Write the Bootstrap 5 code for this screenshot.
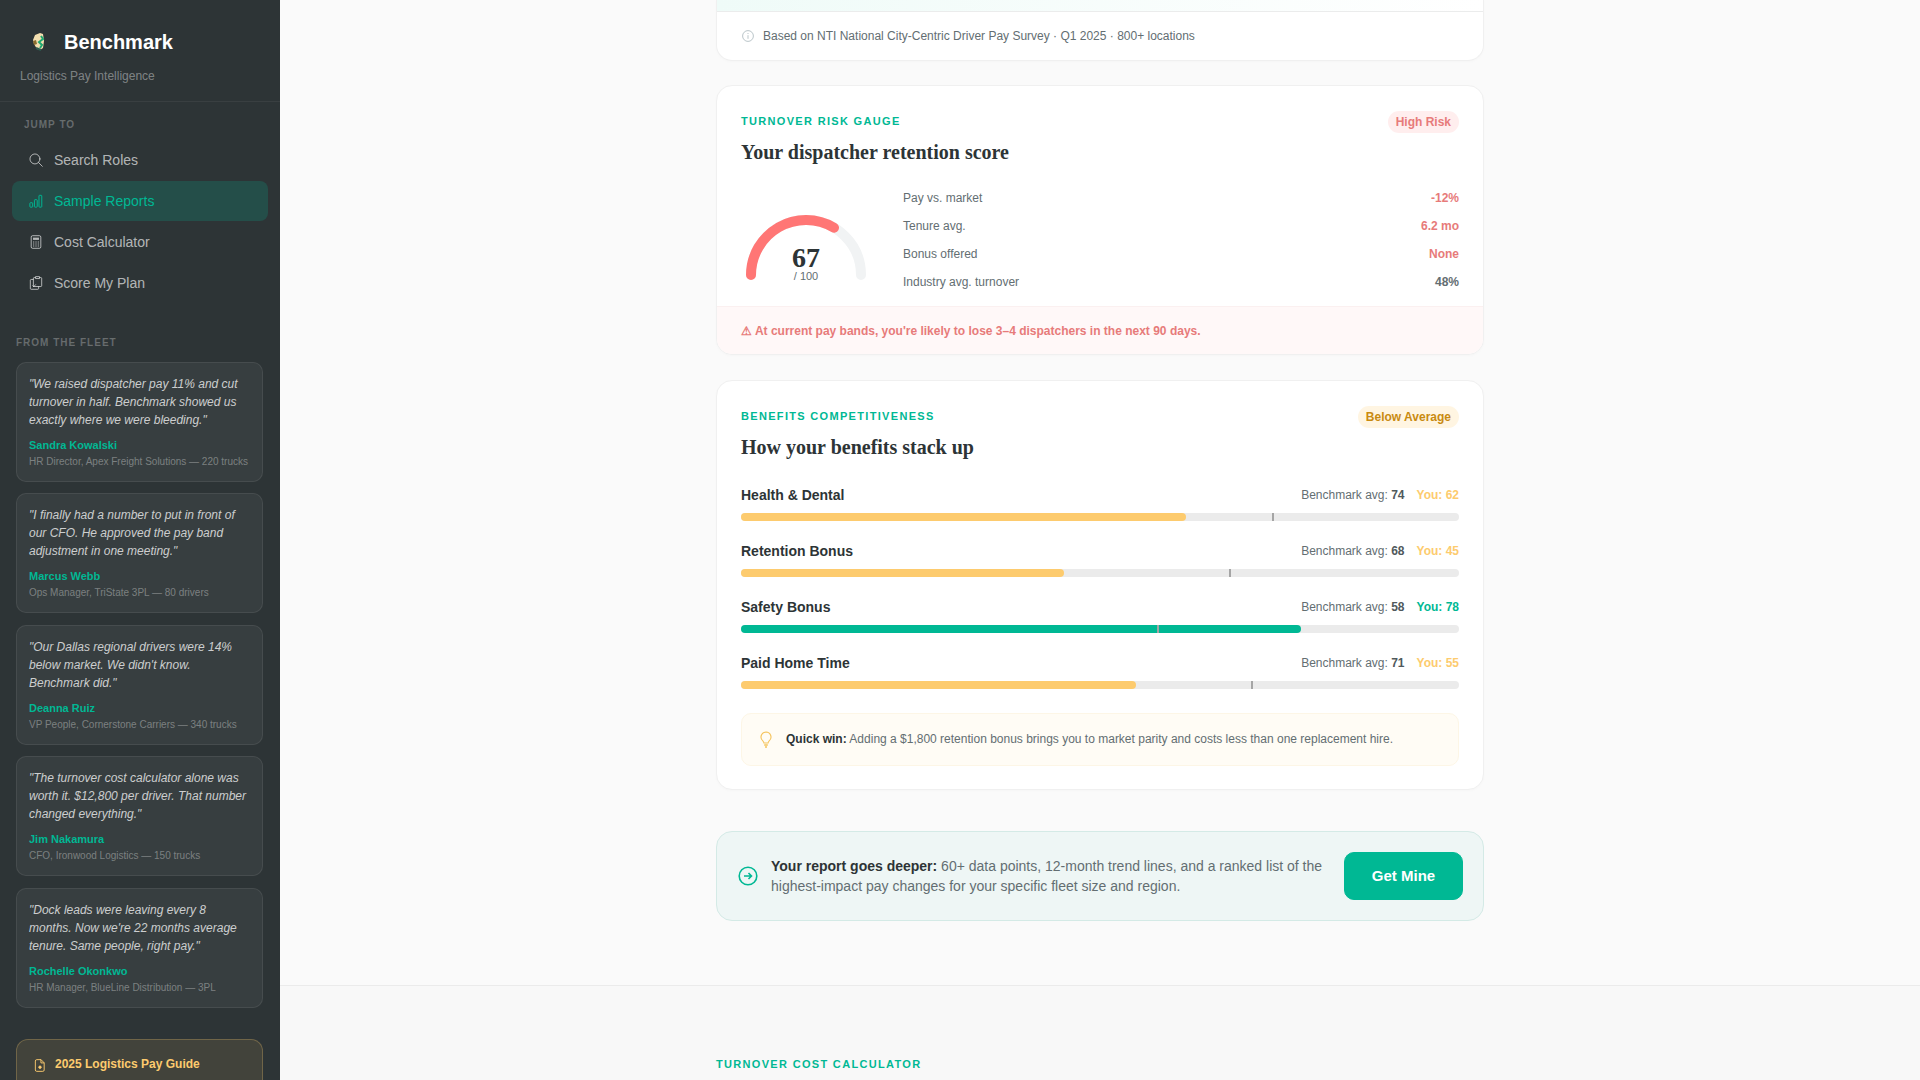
<!DOCTYPE html>
<html lang="en">
<head>
    <meta charset="UTF-8">
    <meta name="viewport" content="width=device-width, initial-scale=1.0">
    <title>Benchmark - Logistics Pay Intelligence</title>
    <link rel="stylesheet" href="https://cdn.jsdelivr.net/npm/bootstrap@5.3.0/dist/css/bootstrap.min.css">
    <script src="https://cdn.jsdelivr.net/npm/bootstrap@5.3.0/dist/js/bootstrap.bundle.min.js"></script>
    <style>
        html, body { height: 100%; overflow: hidden; }
        body { font-family: "Liberation Sans", Arial, sans-serif; background: #fafafa; color: #2d3436; }

        /* sidebar */
        .side-panel { width: 280px; height: 100vh; background: #2d3436; overflow: hidden; flex-shrink: 0; }
        .side-brand { height: 102px; padding: 31px 20px 0; border-bottom: 1px solid rgba(255,255,255,.06); }
        .brand-name { font-size: 20px; font-weight: 700; color: #fff; line-height: 22px; }
        .brand-row { gap: 19px; padding-left: 12px; }
        .brand-sub { font-size: 12px; color: rgba(255,255,255,.4); margin-top: 14px; line-height: 18px; }
        .side-title { font-size: 10px; font-weight: 700; letter-spacing: 1px; text-transform: uppercase; color: rgba(255,255,255,.28); line-height: 15px; }
        .jump-title { padding: 15px 0 0 24px; }
        .side-menu { padding: 8px 12px 0; gap: 1px; }
        .side-menu .nav-link { height: 40px; display: flex; align-items: center; gap: 11px; padding: 0 0 0 17px; font-size: 14px; color: rgba(255,255,255,.65); border-radius: 8px; }
        .side-menu .nav-link.active { background: rgba(0,184,148,.2); color: #00b894; }
        .side-menu svg { flex-shrink: 0; }
        .fleet-title { padding: 32px 0 0 16px; }
        .quote-list { padding: 11.9px 17px 0 16px; gap: 11.5px; }
        .quote-box { background: rgba(255,255,255,.05); border: 1px solid rgba(255,255,255,.08); border-radius: 10px; padding: 12px; }
        .quote-text { font-size: 12px; font-style: italic; line-height: 18px; color: rgba(255,255,255,.75); margin: 0 0 8px; }
        .quote-name { font-size: 11px; font-weight: 700; color: #00b894; line-height: 17px; }
        .quote-role { font-size: 10px; color: rgba(255,255,255,.35); line-height: 15px; }
        .guide-box { margin: 31px 17px 0 16px; padding: 15px 17px 40px; background: rgba(253,203,110,.1); border: 1px solid rgba(253,203,110,.25); border-radius: 12px; gap: 9px; font-size: 12px; font-weight: 700; color: #fdcb6e; line-height: 18px; }

        /* main */
        .main-pane { height: 100vh; overflow: hidden; }
        .report-col { width: 768px; margin: 0 auto; }
        .rep-card { border: 1px solid #f0f0f0; border-radius: 16px; background: #fff; box-shadow: 0 1px 3px rgba(0,0,0,.02); overflow: hidden; }
        .rep-card + .rep-card { margin-top: 24px; }
        .rep-card + .bench-card { margin-top: 25px; }
        .source-card { border-top: 0; border-top-left-radius: 0; border-top-right-radius: 0; }
        .source-strip { height: 12px; background: linear-gradient(90deg, #effbf8, #fff); border-bottom: 1px solid #ebecec; }
        .source-note { height: 48px; padding-left: 25px; gap: 9px; font-size: 12px; color: #636e72; }
        .card-pad { padding: 27px 24px 0; }
        .eyebrow { font-size: 11px; font-weight: 700; letter-spacing: 1.32px; text-transform: uppercase; color: #00b894; line-height: 16px; }
        .rep-title { font-family: "Liberation Serif", "Times New Roman", serif; font-size: 20px; font-weight: 700; color: #2d3436; line-height: 26px; margin: 10px 0 0; }
        .tag-pill { font-size: 12px; font-weight: 700; line-height: 14px; padding: 4px 8px; border-radius: 20px; margin-top: -2px; }
        .tag-high { background: rgba(255,118,117,.12); color: #e77b7a; }
        .tag-below { background: rgba(253,203,110,.2); color: #c98a10; }

        .gauge-row { padding: 19px 24px 10px; gap: 32px; }
        .gauge-wrap { width: 130px; height: 85px; margin-top: 16px; }
        .gauge-num { top: 41px; left: 0; right: 0; text-align: center; font-family: "Liberation Serif", serif; font-size: 28px; font-weight: 700; line-height: 34px; color: #2d3436; }
        .gauge-max { top: 68px; left: 0; right: 0; text-align: center; font-size: 11px; line-height: 16px; color: #636e72; }
        .stat-row { height: 28px; font-size: 12px; color: #636e72; }
        .stat-bad { font-weight: 700; color: #e77b7a; }
        .stat-plain { font-weight: 700; color: #636e72; }
        .risk-bar { height: 48px; padding-left: 24px; background: #fff8f8; border-top: 1px solid #fbf0f0; font-size: 12px; font-weight: 700; color: #e77b7a; }

        .bench-list { margin: 25px 0 4px; }
        .bench-item { height: 56px; }
        .bench-name { font-size: 14px; font-weight: 700; line-height: 20px; color: #2d3436; }
        .bench-nums { font-size: 12px; color: #636e72; gap: 12px; }
        .bench-nums b { color: #50595c; }
        .you-low { font-weight: 700; color: #fdcb6e; }
        .you-ok { font-weight: 700; color: #00b894; }
        .bench-track { height: 8px; margin-top: 8px; background: #ebebeb; border-radius: 4px; }
        .bench-fill { height: 8px; border-radius: 4px; }
        .fill-low { background: #fdcb6e; }
        .fill-ok { background: #00b894; }
        .bench-mark { position: absolute; top: 0; width: 2px; height: 8px; background: #a5a5a5; }
        .win-box { margin: 0 0 23px; padding: 16px; background: #fffcf5; border: 1px solid #fdf6e6; border-radius: 10px; gap: 12px; font-size: 12px; line-height: 19px; color: #636e72; }
        .win-box b { color: #2d3436; }

        .cta-box { margin-top: 41px; padding: 20px; background: #eef6f5; border: 1px solid #d4eae6; border-radius: 16px; gap: 13px; font-size: 14px; line-height: 20px; color: #636e72; }
        .cta-box b { color: #2d3436; }
        .cta-icon { margin-left: 1px; }
        .cta-btn { width: 119px; height: 48px; flex-shrink: 0; background: #00b894; border-color: #00b894; color: #fff; border-radius: 10px; font-size: 15px; font-weight: 700; }
        .sect-rule { margin-top: 64px; border-top: 1px solid #ebebeb; }
        .calc-band { background: #f8f8f8; height: 200px; }
        .calc-head { padding-top: 70px; }
    </style>
</head>
<body>
    <div class="d-flex">
        <aside class="side-panel">
            <div class="side-brand">
                <div class="d-flex align-items-center brand-row">
                    <svg width="13" height="20" viewBox="0 0 13 20">
                        <path d="M3 3l5-2 3 1 1 7-1 7-3 2-3-1-3-5-1-4z" fill="#f3dfb0"/>
                        <path d="M1 9l3-1 1 4-3 1z" fill="#8a6d2f"/>
                        <path d="M9 4l2 3-4 3 3 3-2 3" fill="none" stroke="#1fa870" stroke-width="2"/>
                        <path d="M4 16l5 2" stroke="#2d5c50" stroke-width="2"/>
                    </svg>
                    <span class="brand-name">Benchmark</span>
                </div>
                <div class="brand-sub">Logistics Pay Intelligence</div>
            </div>

            <div class="side-title jump-title">Jump to</div>
            <nav class="nav flex-column side-menu">
                <a class="nav-link" href="#">
                    <svg width="14" height="14" viewBox="0 0 16 16" fill="none" stroke="currentColor" stroke-width="1.1" stroke-linecap="round"><circle cx="6.8" cy="6.8" r="5.7"/><path d="M11 11l4.2 4.2"/></svg>
                    Search Roles
                </a>
                <a class="nav-link active" href="#">
                    <svg width="14" height="14" viewBox="0 0 16 16" fill="none" stroke="currentColor" stroke-width="1.1"><rect x="1" y="10" width="3.2" height="5" rx=".7"/><rect x="6.2" y="6.5" width="3.2" height="8.5" rx=".7"/><rect x="11.4" y="1.5" width="3.2" height="13.5" rx=".7"/></svg>
                    Sample Reports
                </a>
                <a class="nav-link" href="#">
                    <svg width="14" height="14" viewBox="0 0 16 16" fill="none" stroke="currentColor" stroke-width="1.1"><rect x="2.5" y=".8" width="11" height="14.4" rx="1.6"/><rect x="4.6" y="3" width="6.8" height="2.6" fill="currentColor" stroke="none"/><path d="M4.6 8h1.4M7.3 8h1.4M10 8h1.4M4.6 10.3h1.4M7.3 10.3h1.4M10 10.3h1.4M4.6 12.6h1.4M7.3 12.6h1.4M10 12.6h1.4" stroke-width="1.2"/></svg>
                    Cost Calculator
                </a>
                <a class="nav-link" href="#">
                    <svg width="14" height="14" viewBox="0 0 16 16" fill="none" stroke="currentColor" stroke-width="1.1" stroke-linejoin="round"><path d="M5 4H2.5a1 1 0 0 0-1 1v9.2a1 1 0 0 0 1 1H10a1 1 0 0 0 1-1V12"/><path d="M5 12V2.8a1 1 0 0 1 1-1h7.5a1 1 0 0 1 1 1V11a1 1 0 0 1-1 1H5z"/><rect x="7.5" y=".7" width="4.5" height="2.2" fill="#2d3436"/><path d="M4 10.8l1.4 1.4 2.4-2.6"/></svg>
                    Score My Plan
                </a>
            </nav>

            <div class="side-title fleet-title">From the fleet</div>
            <div class="d-flex flex-column quote-list">
                <div class="quote-box">
                    <p class="quote-text">"We raised dispatcher pay 11% and cut turnover in half. Benchmark showed us exactly where we were bleeding."</p>
                    <div class="quote-name">Sandra Kowalski</div>
                    <div class="quote-role">HR Director, Apex Freight Solutions — 220 trucks</div>
                </div>
                <div class="quote-box">
                    <p class="quote-text">"I finally had a number to put in front of our CFO. He approved the pay band adjustment in one meeting."</p>
                    <div class="quote-name">Marcus Webb</div>
                    <div class="quote-role">Ops Manager, TriState 3PL — 80 drivers</div>
                </div>
                <div class="quote-box">
                    <p class="quote-text">"Our Dallas regional drivers were 14% below market. We didn't know. Benchmark did."</p>
                    <div class="quote-name">Deanna Ruiz</div>
                    <div class="quote-role">VP People, Cornerstone Carriers — 340 trucks</div>
                </div>
                <div class="quote-box">
                    <p class="quote-text">"The turnover cost calculator alone was worth it. $12,800 per driver. That number changed everything."</p>
                    <div class="quote-name">Jim Nakamura</div>
                    <div class="quote-role">CFO, Ironwood Logistics — 150 trucks</div>
                </div>
                <div class="quote-box">
                    <p class="quote-text">"Dock leads were leaving every 8 months. Now we're 22 months average tenure. Same people, right pay."</p>
                    <div class="quote-name">Rochelle Okonkwo</div>
                    <div class="quote-role">HR Manager, BlueLine Distribution — 3PL</div>
                </div>
            </div>
            <div class="guide-box d-flex align-items-start">
                <svg class="mt-1" width="12" height="13" viewBox="0 0 12 14" fill="none" stroke="currentColor" stroke-width="1"><path d="M2.5 .7h4.6l3.4 3.4v7.7a1.5 1.5 0 0 1-1.5 1.5h-6.5a1.5 1.5 0 0 1-1.5-1.5V2.2A1.5 1.5 0 0 1 2.5.7z"/><path d="M7 .7v3.5h3.5"/><circle cx="6" cy="8.8" r="1.3" fill="currentColor"/></svg>
                <span>2025 Logistics Pay Guide</span>
            </div>
        </aside>

        <main class="main-pane flex-grow-1">
            <div class="report-col">
                <div class="rep-card source-card">
                    <div class="source-strip"></div>
                    <div class="source-note d-flex align-items-center">
                        <svg width="12" height="12" viewBox="0 0 12 12" fill="none" stroke="#b2bec3" stroke-width=".9"><circle cx="6" cy="6" r="5.4"/><path d="M6 5.2v3.6M6 3v1" /></svg>
                        <span>Based on NTI National City-Centric Driver Pay Survey · Q1 2025 · 800+ locations</span>
                    </div>
                </div>

                <div class="rep-card">
                    <div class="card-pad d-flex justify-content-between align-items-start">
                        <div>
                            <div class="eyebrow">Turnover Risk Gauge</div>
                            <h3 class="rep-title">Your dispatcher retention score</h3>
                        </div>
                        <span class="tag-pill tag-high">High Risk</span>
                    </div>
                    <div class="gauge-row d-flex">
                        <div class="gauge-wrap position-relative flex-shrink-0">
                            <svg width="130" height="85" viewBox="0 0 130 85" fill="none" stroke-width="10" stroke-linecap="round">
                                <path d="M10 75A55 55 0 0 1 120 75" stroke="#f1f3f4"/>
                                <path d="M10 75A55 55 0 0 1 93 27.7" stroke="#ff7675"/>
                            </svg>
                            <div class="gauge-num position-absolute">67</div>
                            <div class="gauge-max position-absolute">/ 100</div>
                        </div>
                        <div class="flex-grow-1">
                            <div class="stat-row d-flex justify-content-between align-items-center"><span>Pay vs. market</span><span class="stat-bad">-12%</span></div>
                            <div class="stat-row d-flex justify-content-between align-items-center"><span>Tenure avg.</span><span class="stat-bad">6.2 mo</span></div>
                            <div class="stat-row d-flex justify-content-between align-items-center"><span>Bonus offered</span><span class="stat-bad">None</span></div>
                            <div class="stat-row d-flex justify-content-between align-items-center"><span>Industry avg. turnover</span><span class="stat-plain">48%</span></div>
                        </div>
                    </div>
                    <div class="risk-bar d-flex align-items-center">⚠ At current pay bands, you're likely to lose 3–4 dispatchers in the next 90 days.</div>
                </div>

                <div class="rep-card bench-card">
                    <div class="card-pad">
                        <div class="d-flex justify-content-between align-items-start">
                            <div>
                                <div class="eyebrow">Benefits Competitiveness</div>
                                <h3 class="rep-title">How your benefits stack up</h3>
                            </div>
                            <span class="tag-pill tag-below">Below Average</span>
                        </div>
                        <div class="bench-list">
                            <div class="bench-item">
                                <div class="d-flex justify-content-between align-items-center"><span class="bench-name">Health &amp; Dental</span><span class="bench-nums d-flex"><span>Benchmark avg: <b>74</b></span><span class="you-low">You: 62</span></span></div>
                                <div class="bench-track position-relative"><div class="bench-fill fill-low" style="width:62%"></div><div class="bench-mark" style="left:74%"></div></div>
                            </div>
                            <div class="bench-item">
                                <div class="d-flex justify-content-between align-items-center"><span class="bench-name">Retention Bonus</span><span class="bench-nums d-flex"><span>Benchmark avg: <b>68</b></span><span class="you-low">You: 45</span></span></div>
                                <div class="bench-track position-relative"><div class="bench-fill fill-low" style="width:45%"></div><div class="bench-mark" style="left:68%"></div></div>
                            </div>
                            <div class="bench-item">
                                <div class="d-flex justify-content-between align-items-center"><span class="bench-name">Safety Bonus</span><span class="bench-nums d-flex"><span>Benchmark avg: <b>58</b></span><span class="you-ok">You: 78</span></span></div>
                                <div class="bench-track position-relative"><div class="bench-fill fill-ok" style="width:78%"></div><div class="bench-mark" style="left:58%"></div></div>
                            </div>
                            <div class="bench-item">
                                <div class="d-flex justify-content-between align-items-center"><span class="bench-name">Paid Home Time</span><span class="bench-nums d-flex"><span>Benchmark avg: <b>71</b></span><span class="you-low">You: 55</span></span></div>
                                <div class="bench-track position-relative"><div class="bench-fill fill-low" style="width:55%"></div><div class="bench-mark" style="left:71%"></div></div>
                            </div>
                        </div>
                        <div class="win-box d-flex align-items-center">
                            <svg class="flex-shrink-0" width="16" height="18" viewBox="0 0 16 18" fill="none" stroke="#f5c35c" stroke-width="1.1"><path d="M8 1a5 5 0 0 0-3.2 8.8c.7.7 1 1.4 1.1 2.2h4.2c.1-.8.4-1.5 1.1-2.2A5 5 0 0 0 8 1z"/><path d="M6.2 14h3.6M7 16h2" stroke-width="1.4"/></svg>
                            <span><b>Quick win:</b> Adding a $1,800 retention bonus brings you to market parity and costs less than one replacement hire.</span>
                        </div>
                    </div>
                </div>

                <div class="cta-box d-flex align-items-center">
                    <svg class="cta-icon flex-shrink-0" width="20" height="20" viewBox="0 0 20 20" fill="none" stroke="#00b894" stroke-width="1.6"><circle cx="10" cy="10" r="8.8"/><path d="M6 10h7.5M10.5 7l3 3-3 3"/></svg>
                    <div><b>Your report goes deeper:</b> 60+ data points, 12-month trend lines, and a ranked list of the highest-impact pay changes for your specific fleet size and region.</div>
                    <button type="button" class="btn cta-btn">Get Mine</button>
                </div>
            </div>

            <div class="sect-rule"></div>
            <div class="calc-band">
                <div class="report-col calc-head">
                    <div class="eyebrow">Turnover Cost Calculator</div>
                </div>
            </div>
        </main>
    </div>
</body>
</html>
